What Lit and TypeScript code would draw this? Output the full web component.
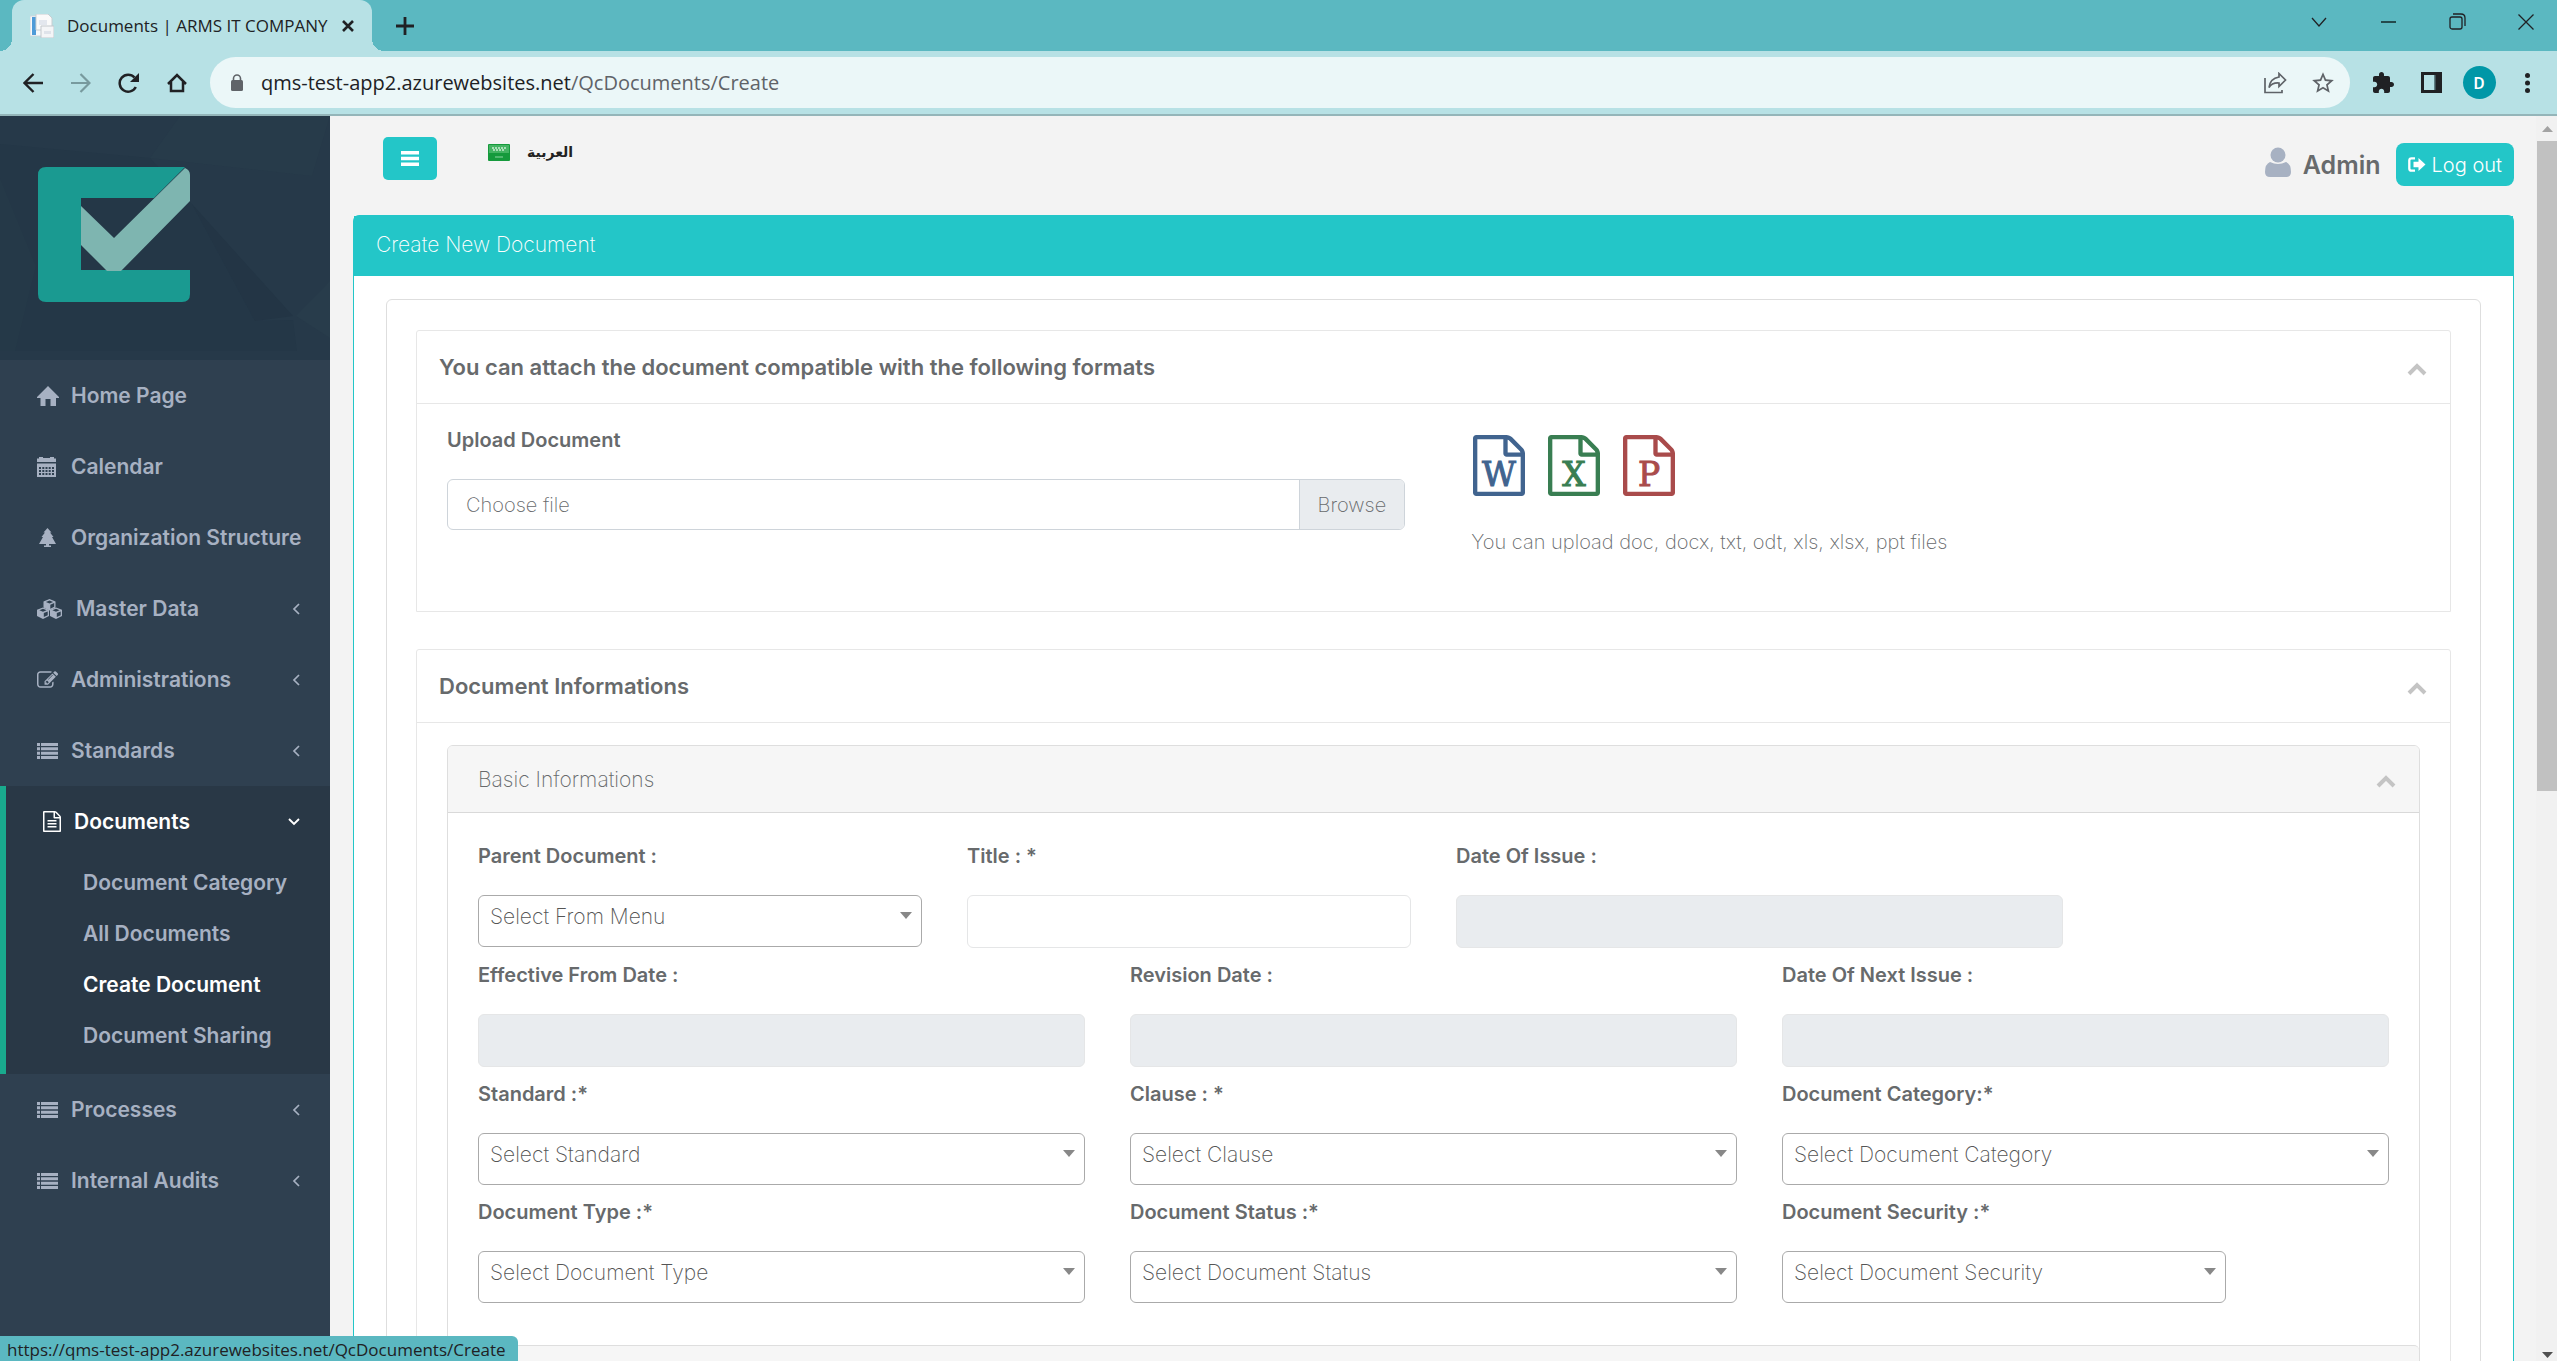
import { LitElement, html, svg, css, nothing } from "lit";
import { customElement, property } from "lit/decorators.js";
import { classMap } from "lit/directives/class-map.js";

const SHEET =
  "M1596 380q28 28 48 76t20 88v1152q0 40-28 68t-68 28h-1344q-40 0-68-28t-28-68v-1600q0-40 28-68t68-28h896q40 0 88 20t76 48zm-444-244v376h376q-10-29-22-41l-313-313q-12-12-41-22zm384 1528v-1024h-416q-40 0-68-28t-28-68v-416h-768v1536h1280z";
const SHEET_LINES =
  "M512 800q0-14 9-23t23-9h704q14 0 23 9t9 23v64q0 14-9 23t-23 9h-704q-14 0-23-9t-9-23v-64zm736 224q14 0 23 9t9 23v64q0 14-9 23t-23 9h-704q-14 0-23-9t-9-23v-64q0-14 9-23t23-9h704zm0 256q14 0 23 9t9 23v64q0 14-9 23t-23 9h-704q-14 0-23-9t-9-23v-64q0-14 9-23t23-9h704z";
const EDIT =
  "M888 1184l116-116-152-152-116 116v56h96v96h56zm440-720q-16-16-33 1l-350 350q-17 17-1 33t33-1l350-350q17-17 1-33zm80 594v190q0 119-84.5 203.5t-203.5 84.5h-832q-119 0-203.5-84.5t-84.5-203.5v-832q0-119 84.5-203.5t203.5-84.5h832q63 0 117 25 15 7 18 23 3 17-9 29l-49 49q-14 14-32 8-23-6-45-6h-832q-66 0-113 47t-47 113v832q0 66 47 113t113 47h832q66 0 113-47t47-113v-126q0-13 9-22l64-64q15-15 35-7t20 29zm-96-738l288 288-672 672h-288v-288zm444 132l-92 92-288-288 92-92q28-28 68-28t68 28l152 152q28 28 28 68t-28 68z";

const cube = (x: number, y: number) => svg`
  <path transform="translate(${x} ${y})" fill="currentColor" fill-rule="evenodd"
    d="M6 0L12 2.4V8.6L6 11.6L0 8.6V2.4ZM6 1.4L2.4 2.9L6 4.4L9.6 2.9ZM6.8 5.7V9.7L10.7 7.8V4.1Z"></path>`;

const ICONS: Record<string, unknown> = {
  home: html`<svg width="22" height="20" viewBox="0 0 22 20"><path fill="currentColor" d="M11 0L22 11V12H19V20H13.500V13H8.500V20H3.500V12H0V11Z"/></svg>`,
  calendar: html`<svg width="19" height="20" viewBox="0 0 19 20"><path fill="currentColor" fill-rule="evenodd" d="M2 0H6V1H13V0H17V1.500H19V5H0V1.500H2ZM0 6.500H19V20H0ZM2 10V12H4V10ZM5.300 10V12H7.300V10ZM8.500 10V12H10.500V10ZM11.700 10V12H13.700V10ZM15 10V12H17V10ZM2 13V15H4V13ZM5.300 13V15H7.300V13ZM8.500 13V15H10.500V13ZM11.700 13V15H13.700V13ZM15 13V15H17V13ZM2 16V18H4V16ZM5.300 16V18H7.300V16ZM8.500 16V18H10.500V16ZM11.700 16V18H13.700V16ZM15 16V18H17V16Z"/></svg>`,
  tree: html`<svg width="19" height="19" viewBox="0 0 19 19"><path fill="currentColor" d="M10.500 0L14.500 4.500H13L16.500 9H15L19 16H12V17.500H14V19H7V17.500H9V16H2L6 9H4.500L8 4.500H6.500Z"/></svg>`,
  cubes: html`<svg width="25" height="20" viewBox="0 0 25 20">${cube(6.5, 0)}${cube(0, 8.4)}${cube(13, 8.4)}</svg>`,
  edit: html`<svg width="21" height="17" viewBox="0 128 1784 1420"><path fill="currentColor" d=${EDIT}/></svg>`,
  list: html`<svg width="21" height="16" viewBox="0 0 21 16"><path fill="currentColor" d="M0 0H3V3H0ZM4 0H21V3H4ZM0 4.300H3V7.300H0ZM4 4.300H21V7.300H4ZM0 8.700H3V11.700H0ZM4 8.700H21V11.700H4ZM0 13H3V16H0ZM4 13H21V16H4Z"/></svg>`,
  file: html`<svg width="18" height="21" viewBox="128 0 1536 1792"><path fill="currentColor" d=${SHEET}/><path fill="currentColor" d=${SHEET_LINES}/></svg>`,
  left: html`<svg width="8" height="12" viewBox="0 0 8 12"><path d="M7 1L2 6L7 11" fill="none" stroke="currentColor" stroke-width="1.700"/></svg>`,
  down: html`<svg width="12" height="8" viewBox="0 0 12 8"><path d="M1 1L6 6L11 1" fill="none" stroke="currentColor" stroke-width="1.900"/></svg>`,
  collapse: html`<svg width="20" height="13" viewBox="0 0 20 13"><path d="M2 11L10 3L18 11" fill="none" stroke="currentColor" stroke-width="4"/></svg>`,
};

const SANS = css`"Inter", "Open Sans", sans-serif`;
const UI = css`"Open Sans", "Noto Sans", sans-serif`;

const shared = css`
  * { box-sizing: border-box; }
  button { border: 0; background: none; padding: 0; margin: 0; font: inherit; color: inherit; display: flex; align-items: center; justify-content: center; }
  a { color: inherit; text-decoration: none; }
  svg { display: block; flex: none; }
`;

@customElement("browser-bar")
export class BrowserBar extends LitElement {
  static styles = [shared, css`
    :host { display: block; font-family: ${UI}; color: #202124; }
    .strip { display: flex; justify-content: space-between; height: 51px; padding: 0 8px 0 12px; background: #5bb8c1; }
    .tabs { display: flex; }
    .tab { position: relative; display: flex; align-items: center; width: 360px; padding: 0 17px 0 18px; background: #b7e1e5; border-radius: 12px 12px 0 0; }
    .tab::before, .tab::after { content: ""; position: absolute; bottom: 0; width: 12px; height: 12px; }
    .tab::before { left: -12px; background: radial-gradient(circle at 0 0, transparent 12px, #b7e1e5 12px); }
    .tab::after { right: -12px; background: radial-gradient(circle at 100% 0, transparent 12px, #b7e1e5 12px); }
    .title { flex: 1; margin-left: 13px; font-size: 17px; white-space: nowrap; }
    .new { width: 66px; }
    .win { display: flex; gap: 23px; height: 43px; }
    .win button { width: 46px; }
    .tools { display: flex; align-items: center; height: 65px; padding: 0 6px 0 9px; background: #b7e1e5; border-bottom: 2px solid #94b5b9; }
    .tools button, .slot { width: 48px; height: 48px; flex: none; display: flex; align-items: center; justify-content: center; }
    .faded { color: #789a9e; }
    .address { flex: 1; display: flex; align-items: center; height: 51px; margin: 0 9px; padding: 0 3px; border-radius: 26px; background: #ebf7f8; color: #5f6368; }
    .url { flex: 1; font-size: 20px; color: #5f6368; white-space: nowrap; }
    .url b { font-weight: 400; color: #202124; }
    .avatar { display: grid; place-items: center; width: 33px; height: 33px; border-radius: 50%; background: #0097a7; color: #fff; font: 500 17px Roboto, sans-serif; }
  `];
  render() {
    return html`
      <div class="strip">
        <div class="tabs">
          <div class="tab">
            <svg width="24" height="24" viewBox="0 0 24 24">
              <path d="M0 2H13V22H0Z" fill="#f7f9fb" stroke="#cdd6dc"/><path d="M2 3H6V21H2Z" fill="#4f9bd8"/>
              <path d="M6 0H18L22 4V16H6Z" fill="#fafafa" stroke="#c8ced2"/><path d="M9 6H17V11H9Z" fill="#e3e7ee"/>
              <path d="M11 12H24V24H11Z" fill="#f4f5f7" stroke="#c3c9ce"/><path d="M14 17H21V20H14Z" fill="#dfe3ea"/>
            </svg>
            <span class="title">Documents | ARMS IT COMPANY</span>
            <button aria-label="Close tab"><svg width="14" height="14" viewBox="0 0 14 14"><path d="M2 2L12 12M12 2L2 12" stroke="currentColor" stroke-width="2.600"/></svg></button>
          </div>
          <button class="new" aria-label="New tab"><svg width="18" height="18" viewBox="0 0 18 18"><path d="M9 0V18M0 9H18" stroke="currentColor" stroke-width="2.800"/></svg></button>
        </div>
        <div class="win">
          <button aria-label="Search tabs"><svg width="16" height="10" viewBox="0 0 16 10"><path d="M1 1L8 9L15 1" fill="none" stroke="currentColor" stroke-width="1.300"/></svg></button>
          <button aria-label="Minimize"><svg width="15" height="2" viewBox="0 0 15 2"><path d="M0 1H15" stroke="#000" stroke-width="1.200"/></svg></button>
          <button aria-label="Restore"><svg width="17" height="17" viewBox="0 0 17 17"><g fill="none" stroke="#202124" stroke-width="1.300"><rect x="1" y="4" width="12" height="12" rx="2"/><path d="M4 1H12Q16 1 16 5V13"/></g></svg></button>
          <button aria-label="Close"><svg width="16" height="16" viewBox="0 0 16 16"><path d="M0.500 0.500L15.500 15.500M15.500 0.500L0.500 15.500" stroke="#202124" stroke-width="1.300"/></svg></button>
        </div>
      </div>
      <div class="tools">
        <button aria-label="Back"><svg width="20" height="20" viewBox="0 0 20 20"><path d="M20 10H2M10.500 1L1.500 10L10.500 19" fill="none" stroke="currentColor" stroke-width="2.400"/></svg></button>
        <button class="faded" aria-label="Forward"><svg width="20" height="20" viewBox="0 0 20 20"><path d="M0 10H18M9.500 1L18.500 10L9.500 19" fill="none" stroke="currentColor" stroke-width="2.200"/></svg></button>
        <button aria-label="Reload"><svg width="22" height="20" viewBox="0 0 22 20"><path d="M17.800 14A8.500 8.500 0 1 1 16.500 4.500" fill="none" stroke="currentColor" stroke-width="2.500"/><path d="M21 0V9H12Z" fill="currentColor"/></svg></button>
        <button aria-label="Home"><svg width="20" height="20" viewBox="0 0 20 20"><path d="M1 11L10 2L19 11M4 9V18H16V9" fill="none" stroke="currentColor" stroke-width="2.500"/></svg></button>
        <div class="address">
          <span class="slot"><svg width="12" height="17" viewBox="0 0 12 17"><path d="M2.500 7V4.500A3.500 3.500 0 0 1 9.500 4.500V7" fill="none" stroke="currentColor" stroke-width="1.600"/><rect y="6" width="12" height="11" rx="1.500" fill="currentColor"/></svg></span>
          <span class="url"><b>qms-test-app2.azurewebsites.net</b>/QcDocuments/Create</span>
          <button aria-label="Share"><svg width="23" height="22" viewBox="0 0 23 22"><g fill="none" stroke="currentColor" stroke-width="1.700"><path d="M1 6V20.500H18V18"/><path d="M15 1.500L21.500 8L15 14.500V11Q8 10.500 5 15.500Q6 6.500 15 5Z"/></g></svg></button>
          <button aria-label="Bookmark"><svg width="26" height="26" viewBox="0 0 24 24"><path fill="currentColor" d="M22 9.240l-7.190-.62L12 2 9.190 8.630 2 9.240l5.460 4.730L5.820 21 12 17.270 18.180 21l-1.630-7.030L22 9.240zM12 15.400l-3.760 2.270 1-4.280-3.320-2.880 4.380-.38L12 6.100l1.710 4.040 4.380.38-3.320 2.880 1 4.280L12 15.400z"/></svg></button>
        </div>
        <button aria-label="Extensions"><svg width="24" height="24" viewBox="0 0 24 24"><path fill="currentColor" d="M20.500 11H19V7c0-1.100-.9-2-2-2h-4V3.500C13 2.120 11.880 1 10.500 1S8 2.120 8 3.500V5H4c-1.100 0-1.990.9-1.990 2v3.800H3.500c1.490 0 2.700 1.210 2.700 2.700s-1.210 2.700-2.700 2.700H2V20c0 1.100.9 2 2 2h3.800v-1.500c0-1.490 1.210-2.700 2.700-2.700 1.490 0 2.700 1.210 2.700 2.700V22H17c1.100 0 2-.9 2-2v-4h1.500c1.380 0 2.500-1.120 2.500-2.500S21.880 11 20.500 11z"/></svg></button>
        <button aria-label="Side panel"><svg width="21" height="21" viewBox="0 0 21 21"><path fill="currentColor" fill-rule="evenodd" d="M0 0H21V21H0ZM3 3V18H13V3Z"/><path d="M13 3H14.500V18H13Z" fill="#5f7f83"/></svg></button>
        <button aria-label="Profile"><span class="avatar">D</span></button>
        <button aria-label="Menu"><svg width="5" height="20" viewBox="0 0 5 20"><g fill="currentColor"><circle cx="2.500" cy="2.500" r="2.500"/><circle cx="2.500" cy="10" r="2.500"/><circle cx="2.500" cy="17.500" r="2.500"/></g></svg></button>
      </div>`;
  }
}

interface NavItem { icon: string; text: string; more?: boolean; children?: string[]; }
const NAV: NavItem[] = [
  { icon: "home", text: "Home Page" },
  { icon: "calendar", text: "Calendar" },
  { icon: "tree", text: "Organization Structure" },
  { icon: "cubes", text: "Master Data", more: true },
  { icon: "edit", text: "Administrations", more: true },
  { icon: "list", text: "Standards", more: true },
  { icon: "file", text: "Documents", children: ["Document Category", "All Documents", "Create Document", "Document Sharing"] },
  { icon: "list", text: "Processes", more: true },
  { icon: "list", text: "Internal Audits", more: true },
];

@customElement("side-nav")
export class SideNav extends LitElement {
  static styles = [shared, css`
    :host { display: block; background: #2f4050; color: #a7b1c2; font: 600 21px ${SANS}; }
    .brand { position: relative; height: 244px; padding: 51px 38px; background: #263949; overflow: hidden; }
    .facets { position: absolute; inset: 0; }
    .logo { position: relative; }
    ul { list-style: none; margin: 0; padding: 0; }
    .item { display: flex; align-items: center; height: 71px; padding: 0 30px 0 37px; white-space: nowrap; }
    .icon { min-width: 22px; margin-right: 12px; }
    .icon.wide { margin-right: 14px; }
    .name { flex: 1; }
    .active { background: #293846; border-left: 6px solid #19aa8d; }
    .active .item { color: #fff; }
    .active .icon { min-width: 18px; margin-right: 13px; }
    .sub { padding-bottom: 13px; }
    .sub a { display: block; height: 51px; line-height: 51px; padding-left: 77px; }
    .sub .current { color: #fff; }
  `];
  render() {
    return html`
      <div class="brand">
        <svg class="facets" width="330" height="244" viewBox="0 0 330 244">
          <path d="M0 28L150 42L192 88L255 205L293 204L298 244H0Z" fill="#243747"/>
          <path d="M192 88L293 200L255 205Z" fill="#233545"/>
          <path d="M150 42L180 0H330L312 60Z" fill="#273b4a"/>
          <path d="M296 200L330 165V222Z" fill="#283c4b"/>
          <path d="M0 62L36 150L14 240L0 244Z" fill="#253948"/>
          <path d="M0 235H330V244H0Z" fill="#263949"/>
        </svg>
        <svg class="logo" width="152" height="135" viewBox="0 0 152 135">
          <path fill="#1a9a91" d="M8 0H147L116 31H43V103H152V127Q152 135 144 135H8Q0 135 0 127V8Q0 0 8 0Z"/>
          <path fill="#7eb5b0" d="M43 39L76 71L147 1Q152 3 152 8V34L83 104H69L43 78Z"/>
        </svg>
      </div>
      <nav><ul>${NAV.map((n) => html`
        <li class=${classMap({ active: !!n.children })}>
          <a class="item" href="#">
            <span class=${classMap({ icon: true, wide: n.icon === "cubes" })}>${ICONS[n.icon]}</span>
            <span class="name">${n.text}</span>
            ${n.more ? ICONS.left : n.children ? ICONS.down : nothing}
          </a>
          ${n.children ? html`<ul class="sub">${n.children.map((c) => html`
            <li><a href="#" class=${classMap({ current: c === "Create Document" })}>${c}</a></li>`)}</ul>` : nothing}
        </li>`)}</ul></nav>`;
  }
}

interface Field { id: string; label: string; kind: "select" | "text" | "locked"; span: number; hint?: string; }
const FIELDS: Field[] = [
  { id: "parent", label: "Parent Document :", kind: "select", span: 3, hint: "Select From Menu" },
  { id: "title", label: "Title : *", kind: "text", span: 3 },
  { id: "issue", label: "Date Of Issue :", kind: "locked", span: 4 },
  { id: "effective", label: "Effective From Date :", kind: "locked", span: 4 },
  { id: "revision", label: "Revision Date :", kind: "locked", span: 4 },
  { id: "next", label: "Date Of Next Issue :", kind: "locked", span: 4 },
  { id: "standard", label: "Standard :*", kind: "select", span: 4, hint: "Select Standard" },
  { id: "clause", label: "Clause : *", kind: "select", span: 4, hint: "Select Clause" },
  { id: "category", label: "Document Category:*", kind: "select", span: 4, hint: "Select Document Category" },
  { id: "type", label: "Document Type :*", kind: "select", span: 4, hint: "Select Document Type" },
  { id: "status", label: "Document Status :*", kind: "select", span: 4, hint: "Select Document Status" },
  { id: "security", label: "Document Security :*", kind: "select", span: 3, hint: "Select Document Security" },
];
const FORMATS = [
  { letter: "W", color: "#41648f" },
  { letter: "X", color: "#397e52" },
  { letter: "P", color: "#a94b4b" },
];

@customElement("document-form")
export class DocumentForm extends LitElement {
  @property({ type: String }) heading = "Create New Document";
  static styles = [shared, css`
    :host { display: block; font: 200 21px ${SANS}; color: #676a6c; }
    h1, h2, h3 { margin: 0; font: inherit; }
    .panel { border: 1px solid #23c6c8; border-radius: 6px 6px 0 0; background: #fff; }
    .panel-head { height: 60px; padding: 0 22px; line-height: 58px; background: #23c6c8; color: #fff; }
    .panel-body { padding: 23px 32px; }
    .sheet { border: 1px solid #dedede; border-radius: 6px; padding: 30px 29px; }
    .box { border: 1px solid #e7e7e7; border-radius: 3px 3px 0 0; }
    .box + .box { margin-top: 37px; }
    .box-head { display: flex; align-items: center; justify-content: space-between; height: 73px; padding: 0 23px 0 22px; border-bottom: 1px solid #e7e7e7; }
    .box-head h2 { font-size: 22px; font-weight: 600; }
    .fold { color: #c4c4c4; padding-top: 4px; }
    .upload { display: grid; grid-template-columns: 101fr 100fr; gap: 66px; height: 207px; padding: 20px 30px; }
    label { display: block; font-weight: 600; font-size: 20px; line-height: 32px; margin-bottom: 23px; white-space: nowrap; }
    .picker { position: relative; display: flex; height: 51px; border: 1px solid #ced4da; border-radius: 6px; overflow: hidden; line-height: 51px; font-size: 20px; }
    .picker input { position: absolute; inset: 0; width: 100%; height: 100%; opacity: 0; }
    .choose { flex: 1; padding-left: 18px; }
    .browse { padding: 0 18px; background: #e9ecef; border-left: 1px solid #ced4da; }
    .formats { display: flex; gap: 23px; padding: 11px 0 31px 2px; }
    .formats text { font-family: "DejaVu Serif", serif; font-size: 33px; text-anchor: middle; stroke-width: 1px; }
    .note { margin: 0; line-height: 30px; font-size: 20px; }
    .inner { padding: 22px 30px; }
    .card { border: 1px solid #dedede; border-radius: 6px; }
    .card-head { display: flex; align-items: center; justify-content: space-between; height: 67px; padding: 0 23px 0 30px; background: #f6f6f6; border-bottom: 1px solid #d9d9d9; border-radius: 5px 5px 0 0; }
    .grid { display: grid; grid-template-columns: repeat(12, minmax(0, 1fr)); column-gap: 45px; row-gap: 11px; padding: 27px 30px 42px; }
    .next { border-top: 1px solid #dedede; }
    .s3 { grid-column: span 3; }
    .s4 { grid-column: span 4; }
    .last { grid-column: span 6; display: grid; grid-template-columns: subgrid; }
    .wrap { position: relative; }
    .arrow { position: absolute; right: 10px; top: 17px; color: #888; pointer-events: none; }
    select, .text { display: block; width: 100%; margin: 0; font: 200 21px ${SANS}; color: #555; background: #fff; border-radius: 6px; outline: 0; }
    select { height: 52px; appearance: none; padding: 0 30px 10px 11px; border: 1px solid #aaa; }
    .text { height: 53px; padding: 0 12px; border: 1px solid #e5e6e7; }
    .text:disabled { background: #e9ecef; }
  `];
  private field(f: Field) {
    const cell = classMap({ s3: f.span === 3, s4: f.span === 4 });
    const body = html`
      <label for=${f.id}>${f.label}</label>
      ${f.kind === "select"
        ? html`<div class="wrap"><select id=${f.id}><option>${f.hint}</option></select>
            <svg class="arrow" width="12" height="7" viewBox="0 0 12 7"><path d="M0 0H12L6 7Z" fill="currentColor"/></svg></div>`
        : html`<input class="text" id=${f.id} type="text" ?disabled=${f.kind === "locked"}>`}`;
    return f.id === "issue"
      ? html`<div class="last"><div class=${cell}>${body}</div></div>`
      : html`<div class=${cell}>${body}</div>`;
  }
  render() {
    const fold = html`<button class="fold" aria-label="Collapse">${ICONS.collapse}</button>`;
    return html`
      <section class="panel">
        <h1 class="panel-head">${this.heading}</h1>
        <div class="panel-body"><div class="sheet">
          <section class="box">
            <div class="box-head"><h2>You can attach the document compatible with the following formats</h2>${fold}</div>
            <div class="upload">
              <div>
                <label for="file">Upload Document</label>
                <div class="picker">
                  <span class="choose">Choose file</span><span class="browse">Browse</span>
                  <input id="file" type="file">
                </div>
              </div>
              <div>
                <div class="formats">${FORMATS.map((f) => html`
                  <svg width="52" height="61" viewBox="0 0 52 61" role="img" aria-label=${f.letter} fill=${f.color}>
                    <g transform="scale(0.03385 0.03404) translate(-128 0)"><path d=${SHEET}></path></g>
                    <text x="26" y="51" stroke=${f.color}>${f.letter}</text>
                  </svg>`)}</div>
                <p class="note">You can upload doc, docx, txt, odt, xls, xlsx, ppt files</p>
              </div>
            </div>
          </section>
          <section class="box">
            <div class="box-head"><h2>Document Informations</h2>${fold}</div>
            <div class="inner"><div class="card">
              <div class="card-head"><h3>Basic Informations</h3>${fold}</div>
              <div class="grid">${FIELDS.map((f) => this.field(f))}</div>
              <div class="card-head next"></div>
            </div></div>
          </section>
        </div></div>
      </section>`;
  }
}

@customElement("app-root")
export class AppRoot extends LitElement {
  static styles = [shared, css`
    :host { position: relative; display: flex; flex-direction: column; height: 100vh; overflow: hidden; background: #f3f3f3; }
    .page { flex: 1; min-height: 0; display: flex; }
    side-nav { width: 330px; flex: none; }
    main { flex: 1; min-width: 0; overflow: hidden; padding: 0 22px 0 23px; }
    .top { display: flex; align-items: flex-start; height: 99px; padding: 21px 0 0 30px; font-family: ${SANS}; }
    .burger { width: 54px; height: 43px; border-radius: 5px; background: #23c6c8; color: #fff; }
    .lang { display: flex; align-items: center; gap: 17px; height: 32px; margin-left: 51px; font: 700 14px/20px "DejaVu Sans", sans-serif; color: #222; }
    .lang span { padding-bottom: 3px; }
    .user { display: flex; align-items: center; height: 43px; margin: 6px 0 0 auto; color: #676a6c; font-size: 25px; font-weight: 600; }
    .user > svg { margin-bottom: 4px; }
    .user .name { margin: 0 15px 0 12px; }
    .logout { display: flex; align-items: center; gap: 6px; height: 43px; padding: 0 12px; border-radius: 8px; background: #23c6c8; color: #fff; font-size: 20px; font-weight: 300; }
    .rail { width: 21px; flex: none; display: flex; flex-direction: column; align-items: center; padding: 10px 0 3px 1px; background: #f1f1f1; }
    .thumb { width: 20px; height: 650px; margin: 9px 0 auto; background: #c1c1c1; }
    .status { position: absolute; left: 0; bottom: 0; height: 25px; padding: 0 12px 0 7px; border-radius: 0 6px 0 0; background: #5bb8c1; color: #202124; font: 17px/28px ${UI}; white-space: nowrap; }
  `];
  render() {
    return html`
      <browser-bar></browser-bar>
      <div class="page">
        <side-nav></side-nav>
        <main>
          <div class="top">
            <button class="burger" aria-label="Toggle menu"><svg width="18" height="15" viewBox="0 0 18 15"><path d="M0 0H18V3.500H0ZM0 5.800H18V9.200H0ZM0 11.500H18V15H0Z" fill="currentColor"/></svg></button>
            <a class="lang" href="#">
              <svg width="22" height="20" viewBox="0 0 22 20"><rect y="1" width="22" height="17" rx="1" fill="#159a3c"/><rect x="1" y="2" width="20" height="8" fill="#44b463"/><path d="M4 5H18M5 7H17" stroke="#c9ecd2" stroke-width="1.500" stroke-dasharray="2 1"/><path d="M7 14H15" stroke="#8fd4a2"/></svg>
              <span lang="ar">العربية</span>
            </a>
            <div class="user">
              <svg width="26" height="31" viewBox="0 0 26 31"><circle cx="13" cy="8" r="7.500" fill="#a7b1c2"/><path d="M5 15Q13 19 21 15Q26 17 26 25Q26 30 21 30H5Q0 30 0 25Q0 17 5 15Z" fill="#a7b1c2"/></svg>
              <span class="name">Admin</span>
              <button class="logout"><svg width="18" height="15" viewBox="0 0 18 15"><path d="M7 1.300H3.500Q1.300 1.300 1.300 3.500V11.500Q1.300 13.700 3.500 13.700H7" fill="none" stroke="currentColor" stroke-width="2.300"/><path d="M5.500 4.800H10.500V1L17.500 7.500L10.500 14V10.200H5.500Z" fill="currentColor"/></svg>Log out</button>
            </div>
          </div>
          <document-form></document-form>
        </main>
        <div class="rail" aria-hidden="true">
          <svg width="11" height="6" viewBox="0 0 11 6"><path d="M0 6L5.500 0L11 6Z" fill="#a3a3a3"/></svg>
          <div class="thumb"></div>
          <svg width="11" height="6" viewBox="0 0 11 6"><path d="M0 0L5.500 6L11 0Z" fill="#505050"/></svg>
        </div>
      </div>
      <div class="status">https://qms-test-app2.azurewebsites.net/QcDocuments/Create</div>`;
  }
}
